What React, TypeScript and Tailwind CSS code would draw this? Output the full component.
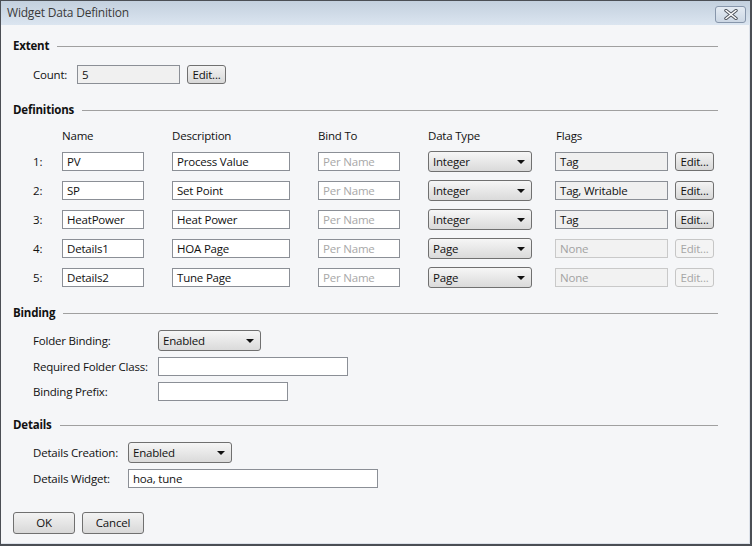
import React from "react"

const font = { fontFamily: '"Open Sans", "Noto Sans", sans-serif' }

function TextBox({ value, width, muted, readOnly, disabled }: { value?: string; width: string; muted?: boolean; readOnly?: boolean; disabled?: boolean }) {
    const tone = disabled
        ? "bg-[#f2f2f2] border-[#c9c9c9] text-[#a3a3a3]"
        : readOnly
        ? "bg-[#f0f0f0] border-[#8b8f96] text-[#111]"
        : "bg-white border-[#8b8f96] text-[#111]"
    return (
        <div className={`h-[19px] ${width} border ${tone} flex items-center pl-[4px] leading-none`}>
            <span className={muted ? "text-[#a8a8a8]" : ""}>{value}</span>
        </div>
    )
}

function Combo({ value, width }: { value: string; width: string }) {
    return (
        <div className={`h-[21px] ${width} border border-[#707070] rounded-[3px] bg-gradient-to-b from-[#f6f6f6] to-[#dadada] flex items-center justify-between pl-[4px] pr-[6px] text-[#111] leading-none`}>
            <span className="mt-[1px]">{value}</span>
            <svg width="8" height="4" viewBox="0 0 8 4">
                <path d="M0 0 H8 L4 4 Z" fill="#111" />
            </svg>
        </div>
    )
}

function Btn({ label, width, disabled, tall }: { label: string; width: string; disabled?: boolean; tall?: boolean }) {
    const tone = disabled
        ? "border-[#c6c6c6] text-[#a6a6a6] bg-[#f4f4f4]"
        : "border-[#707070] text-[#111] bg-gradient-to-b from-[#f3f3f3] to-[#d8d8d8]"
    return (
        <div className={`${tall ? "h-[22px]" : "h-[19px]"} ${width} border rounded-[3px] ${tone} flex items-center justify-center leading-none`}>
            {label}
        </div>
    )
}

function Section({ title, className }: { title: string; className: string }) {
    return (
        <div className={`h-[16px] flex items-center gap-[8px] mr-[31px] ${className}`}>
            <span className="font-bold text-[#111]">{title}</span>
            <div className="flex-1 h-px bg-[#a0a0a0]" />
        </div>
    )
}

const rows = [
    { n: "1:", name: "PV", desc: "Process Value", type: "Integer", flags: "Tag", on: true },
    { n: "2:", name: "SP", desc: "Set Point", type: "Integer", flags: "Tag, Writable", on: true },
    { n: "3:", name: "HeatPower", desc: "Heat Power", type: "Integer", flags: "Tag", on: true },
    { n: "4:", name: "Details1", desc: "HOA Page", type: "Page", flags: "None", on: false },
    { n: "5:", name: "Details2", desc: "Tune Page", type: "Page", flags: "None", on: false },
]

const cols = "grid grid-cols-[29px_110px_146px_110px_127px_120px_39px] items-center"

export default function App() {
    return (
        <div style={font} className="w-[752px] h-[546px] text-[11.5px] tracking-[-0.2px] border-t border-l border-r-2 border-b-2 border-[#4b4f55] flex flex-col bg-[#f5f6f8] overflow-hidden">
            <div className="h-[24px] shrink-0 bg-gradient-to-b from-[#c3d0de] to-[#dbe5f0] flex items-center justify-between pl-[6px] pr-[4px]">
                <span className="text-[#3a3a3a] text-[12px]">Widget Data Definition</span>
                <div className="w-[31px] h-[17px] mt-[2px] border border-[#8796ab] rounded-[3px] bg-gradient-to-b from-[#e4ebf3] to-[#ccd7e4] flex items-center justify-center">
                    <svg width="16" height="11" viewBox="0 0 16 11">
                        <path d="M3 1.5 L13 9.5 M13 1.5 L3 9.5" stroke="#4a4f58" strokeWidth="3.4" strokeLinecap="round" />
                        <path d="M3 1.5 L13 9.5 M13 1.5 L3 9.5" stroke="#ffffff" strokeWidth="1.6" strokeLinecap="round" />
                    </svg>
                </div>
            </div>

            <div className="flex-1 flex flex-col pl-[12px] border-r border-b border-[#dde2ea]">
                <Section title="Extent" className="mt-[13px]" />
                <div className="mt-[11px] h-[19px] ml-[20px] flex items-center">
                    <span className="w-[44px] text-[#111]">Count:</span>
                    <TextBox value="5" width="w-[103px]" readOnly />
                    <div className="ml-[7px]">
                        <Btn label="Edit..." width="w-[39px]" />
                    </div>
                </div>

                <Section title="Definitions" className="mt-[18px]" />
                <div className={`${cols} mt-[9px] h-[16px] ml-[20px] text-[#111]`}>
                    <span />
                    <span>Name</span>
                    <span>Description</span>
                    <span>Bind To</span>
                    <span>Data Type</span>
                    <span className="pl-px">Flags</span>
                    <span />
                </div>
                <div className="flex flex-col gap-[8px] mt-[8px] ml-[20px]">
                    {rows.map((r) => (
                        <div key={r.n} className={`${cols} h-[21px]`}>
                            <span className="text-[#111]">{r.n}</span>
                            <TextBox value={r.name} width="w-[82px]" />
                            <TextBox value={r.desc} width="w-[118px]" />
                            <TextBox value="Per Name" width="w-[82px]" muted />
                            <Combo value={r.type} width="w-[104px]" />
                            <TextBox value={r.flags} width="w-[113px]" readOnly disabled={!r.on} />
                            <Btn label="Edit..." width="w-[39px]" disabled={!r.on} />
                        </div>
                    ))}
                </div>

                <Section title="Binding" className="mt-[17px]" />
                <div className="mt-[9px] h-[21px] ml-[20px] flex items-center">
                    <span className="w-[125px] text-[#111]">Folder Binding:</span>
                    <Combo value="Enabled" width="w-[103px]" />
                </div>
                <div className="mt-[5px] h-[21px] ml-[20px] flex items-center">
                    <span className="w-[125px] text-[#111]">Required Folder Class:</span>
                    <TextBox width="w-[190px]" />
                </div>
                <div className="mt-[4px] h-[21px] ml-[20px] flex items-center">
                    <span className="w-[125px] text-[#111]">Binding Prefix:</span>
                    <TextBox width="w-[130px]" />
                </div>

                <Section title="Details" className="mt-[15px]" />
                <div className="mt-[9px] h-[21px] ml-[20px] flex items-center">
                    <span className="w-[95px] text-[#111]">Details Creation:</span>
                    <Combo value="Enabled" width="w-[104px]" />
                </div>
                <div className="mt-[5px] h-[21px] ml-[20px] flex items-center">
                    <span className="w-[95px] text-[#111]">Details Widget:</span>
                    <TextBox value="hoa, tune" width="w-[250px]" />
                </div>

                <div className="mt-[23px] flex gap-[7px]">
                    <Btn label="OK" width="w-[62px]" tall />
                    <Btn label="Cancel" width="w-[62px]" tall />
                </div>
            </div>
        </div>
    )
}
